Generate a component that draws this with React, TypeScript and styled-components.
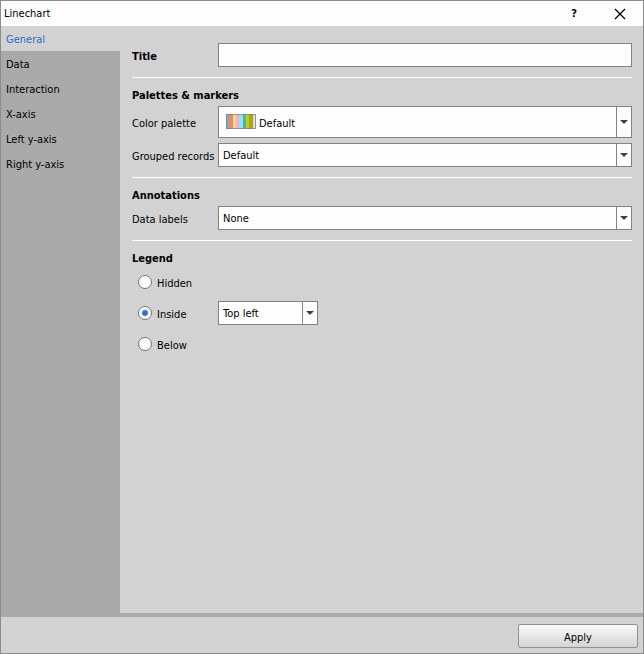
import React, { useState } from "react";
import styled, { createGlobalStyle } from "styled-components";

const line = "#828282";
const panel = "#d2d2d2";
const side = "#aaaaaa";
const field = "#fdfdfd";
const accent = "#2a6fbe";

const GlobalStyle = createGlobalStyle`
  *, *::before, *::after { box-sizing: border-box; }
  body { margin: 0; }
  body, button, input, select {
    font-family: "DejaVu Sans Condensed", "DejaVu Sans", sans-serif;
    font-size: 11px;
    color: #000;
  }
`;

const Dialog = styled.div`
  display: flex;
  flex-direction: column;
  min-height: 100vh;
  border: 1px solid #8c8c8c;
  background: ${panel};
`;

const TitleBar = styled.header`
  display: flex;
  align-items: center;
  height: 25px;
  padding: 0 11px 0 3px;
  background: ${field};
`;

const Caption = styled.h1`
  flex: 1;
  margin: 0;
  font-size: 11px;
  font-weight: normal;
`;

const TitleButton = styled.button`
  display: flex;
  align-items: center;
  justify-content: center;
  width: 24px;
  height: 24px;
  margin-left: 22px;
  padding: 0;
  border: 0;
  background: none;
  font-weight: bold;
`;

const Body = styled.div`
  display: flex;
  flex: 1;
  background: ${side};
`;

const Tabs = styled.nav`
  display: flex;
  flex-direction: column;
  flex: 0 0 119px;
`;

const Tab = styled.button<{ $active: boolean }>`
  height: 25px;
  padding: 2px 5px 0;
  border: 0;
  text-align: left;
  background: ${(p) => (p.$active ? panel : "transparent")};
  color: ${(p) => (p.$active ? accent : "#000")};
`;

const Panel = styled.main`
  flex: 1;
  margin-bottom: 4px;
  padding: 17px 11px 0 12px;
  background: ${panel};
`;

const Section = styled.section`
  display: flex;
  flex-direction: column;
  gap: 5px;
  padding-bottom: 10px;
  & + & {
    border-top: 1px solid #fff;
    padding-top: 8px;
  }
`;

const Heading = styled.h2`
  margin: 0 0 -3px;
  padding-top: 2px;
  font-size: 11px;
  line-height: 16px;
  font-weight: bold;
`;

const Row = styled.div`
  display: grid;
  grid-template-columns: 86px 1fr;
  align-items: center;
`;

const Label = styled.label<{ $bold?: boolean }>`
  padding-top: 2px;
  font-weight: ${(p) => (p.$bold ? "bold" : "normal")};
  white-space: nowrap;
`;

const TextInput = styled.input`
  width: 100%;
  height: 24px;
  padding: 0 4px;
  border: 1px solid ${line};
  background: ${field};
  outline: none;
`;

const ComboBox = styled.div<{ $tall?: boolean; $small?: boolean }>`
  position: relative;
  width: ${(p) => (p.$small ? "100px" : "100%")};
  height: ${(p) => (p.$tall ? "32px" : "24px")};
  border: 1px solid ${line};
  background: ${field};
`;

const Select = styled.select<{ $swatch?: boolean }>`
  display: block;
  width: 100%;
  height: 100%;
  padding: ${(p) => (p.$swatch ? "2px 18px 0 40px" : "0 18px 0 4px")};
  border: 0;
  appearance: none;
  background: transparent;
  outline: none;
`;

const Arrow = styled.span`
  position: absolute;
  inset: 0 0 0 auto;
  display: flex;
  align-items: center;
  justify-content: center;
  width: 15px;
  border-left: 1px solid ${line};
  pointer-events: none;
`;

const Swatch = styled.svg`
  position: absolute;
  left: 7px;
  top: 7px;
  pointer-events: none;
`;

const RadioList = styled.div`
  display: flex;
  flex-direction: column;
  gap: 7px;
  padding-top: 1px;
`;

const RadioRow = styled.div`
  display: grid;
  grid-template-columns: 86px 1fr;
  align-items: center;
  height: 24px;
`;

const RadioLabel = styled.label`
  display: flex;
  align-items: center;
  gap: 5px;
  padding-left: 6px;
`;

const RadioText = styled.span`
  padding-top: 2px;
`;

const Radio = styled.input`
  appearance: none;
  width: 14px;
  height: 14px;
  margin: 0;
  border: 1px solid #757575;
  border-radius: 50%;
  background: ${field};
  &:checked {
    background: radial-gradient(circle, ${accent} 2px, ${field} 4px);
  }
`;

const Footer = styled.footer`
  display: flex;
  justify-content: flex-end;
  padding: 7px 5px 5px;
`;

const ApplyButton = styled.button`
  width: 120px;
  height: 24px;
  padding: 2px 0 0;
  border: 1px solid #919191;
  border-radius: 2px;
  background: linear-gradient(#fafafa, #d4d4d4);
`;

const tabs = ["General", "Data", "Interaction", "X-axis", "Left y-axis", "Right y-axis"];
const positions = ["Hidden", "Inside", "Below"];

const stripes: [string, number, number][] = [
  ["#77aadd", 0, 3],
  ["#ee8866", 3, 4],
  ["#eedd88", 7, 3],
  ["#ffaabb", 10, 3],
  ["#99ddff", 13, 4],
  ["#44bb99", 17, 3],
  ["#bbcc33", 20, 3],
  ["#aaaa00", 23, 4],
  ["#dddddd", 27, 3],
];

function PaletteSwatch() {
  return (
    <Swatch width="30" height="15" viewBox="0 0 30 15" shapeRendering="crispEdges" aria-hidden>
      {stripes.map(([color, x, width]) => (
        <rect key={color} x={x} y="0" width={width} height="15" fill={color} />
      ))}
      <rect x="0.5" y="0.5" width="29" height="14" fill="none" stroke="#808080" strokeOpacity="0.75" />
    </Swatch>
  );
}

interface ComboProps {
  id?: string;
  name?: string;
  value: string;
  tall?: boolean;
  small?: boolean;
  swatch?: boolean;
}

function Combo({ id, name, value, tall, small, swatch }: ComboProps) {
  return (
    <ComboBox $tall={tall} $small={small}>
      {swatch && <PaletteSwatch />}
      <Select id={id} aria-label={name} defaultValue={value} $swatch={swatch}>
        <option>{value}</option>
      </Select>
      <Arrow>
        <svg width="8" height="4" viewBox="0 0 8 4" aria-hidden>
          <path d="M0 0H8L4 4Z" fill="#404040" />
        </svg>
      </Arrow>
    </ComboBox>
  );
}

export default function App() {
  const [tab, setTab] = useState("General");
  const [legend, setLegend] = useState("Inside");

  return (
    <>
      <GlobalStyle />
      <Dialog>
        <TitleBar>
          <Caption>Linechart</Caption>
          <TitleButton aria-label="Help">?</TitleButton>
          <TitleButton aria-label="Close">
            <svg width="12" height="12" viewBox="0 0 12 12" aria-hidden>
              <path d="M1 1L11 11M11 1L1 11" stroke="#000" strokeWidth="1.3" />
            </svg>
          </TitleButton>
        </TitleBar>
        <Body>
          <Tabs>
            {tabs.map((name) => (
              <Tab key={name} $active={name === tab} onClick={() => setTab(name)}>
                {name}
              </Tab>
            ))}
          </Tabs>
          <Panel>
            <Section>
              <Row>
                <Label $bold htmlFor="title">Title</Label>
                <TextInput id="title" type="text" />
              </Row>
            </Section>
            <Section>
              <Heading>Palettes &amp; markers</Heading>
              <Row>
                <Label htmlFor="palette">Color palette</Label>
                <Combo id="palette" value="Default" tall swatch />
              </Row>
              <Row>
                <Label htmlFor="grouped">Grouped records</Label>
                <Combo id="grouped" value="Default" />
              </Row>
            </Section>
            <Section>
              <Heading>Annotations</Heading>
              <Row>
                <Label htmlFor="labels">Data labels</Label>
                <Combo id="labels" value="None" />
              </Row>
            </Section>
            <Section>
              <Heading>Legend</Heading>
              <RadioList role="radiogroup" aria-label="Legend">
                {positions.map((name) => (
                  <RadioRow key={name}>
                    <RadioLabel>
                      <Radio
                        type="radio"
                        name="legend"
                        checked={legend === name}
                        onChange={() => setLegend(name)}
                      />
                      <RadioText>{name}</RadioText>
                    </RadioLabel>
                    {name === "Inside" && <Combo name="Legend position" value="Top left" small />}
                  </RadioRow>
                ))}
              </RadioList>
            </Section>
          </Panel>
        </Body>
        <Footer>
          <ApplyButton>Apply</ApplyButton>
        </Footer>
      </Dialog>
    </>
  );
}
